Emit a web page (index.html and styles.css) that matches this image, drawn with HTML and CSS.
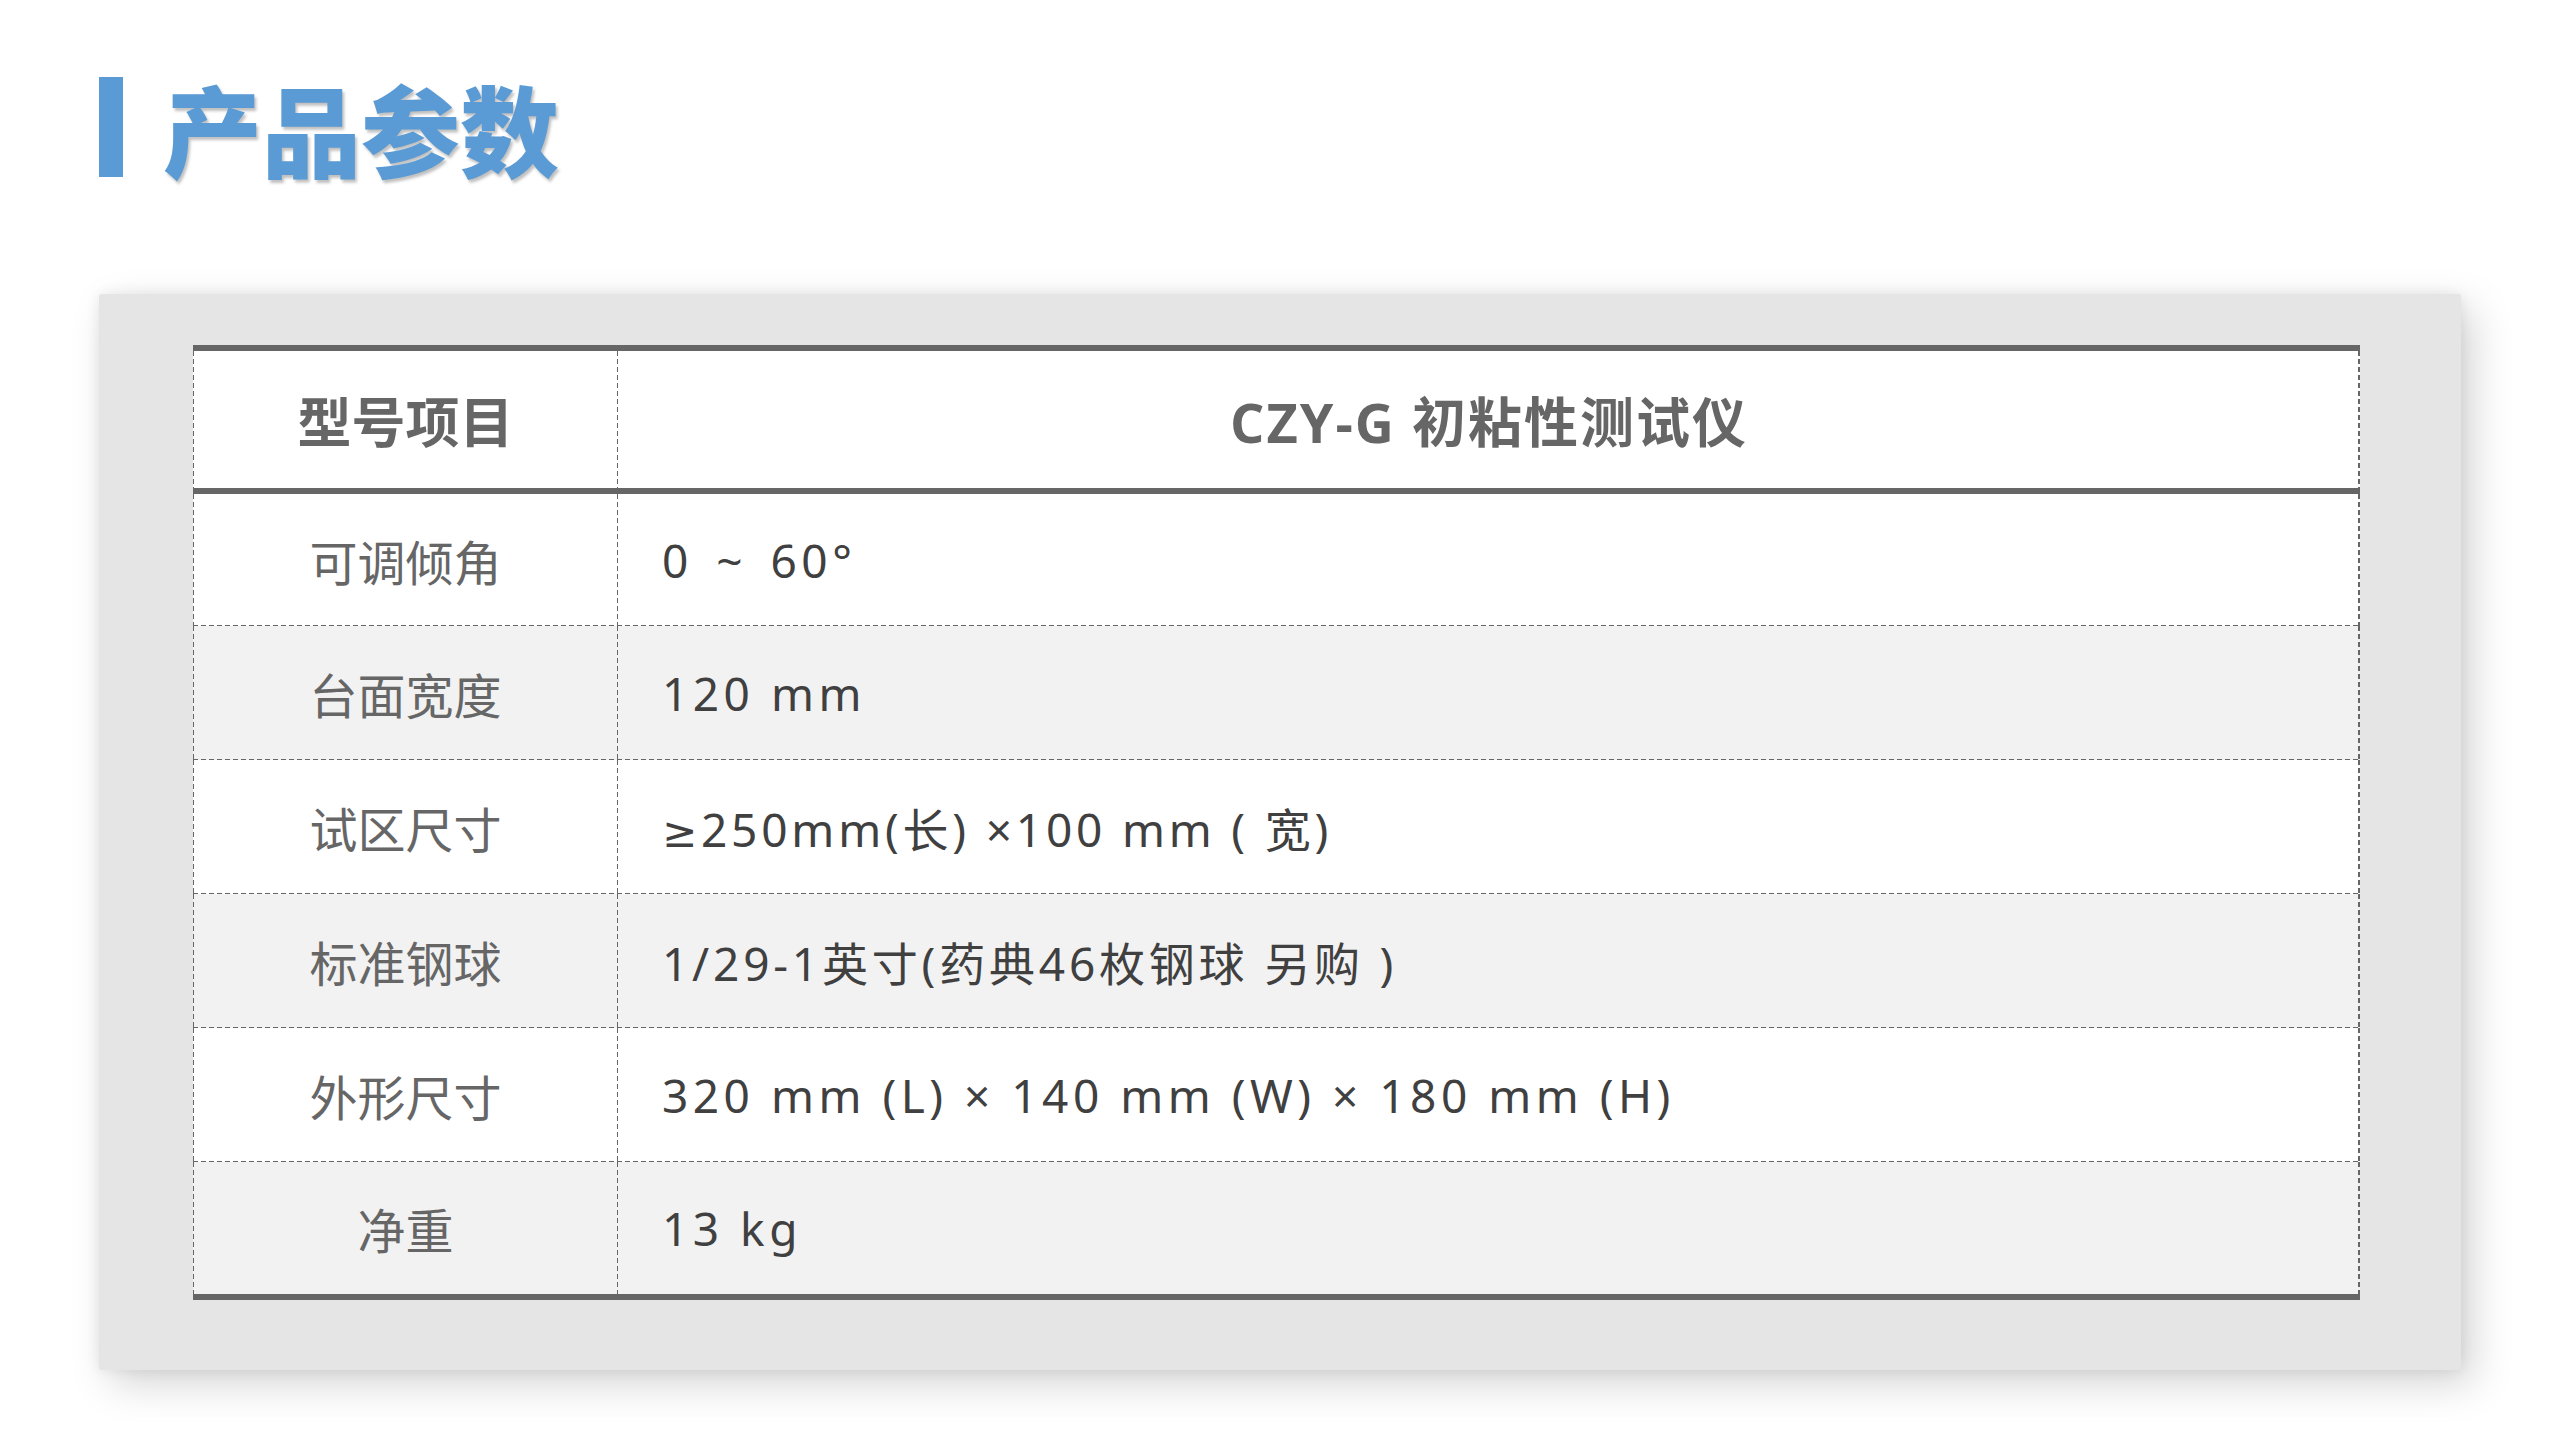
FILE: index.html
```html
<!DOCTYPE html>
<html lang="zh-CN">
<head>
<meta charset="utf-8">
<title>产品参数</title>
<link rel="stylesheet" href="styles.css">
</head>
<body>
<div class="page">
  <header class="title-bar">
    <span class="title-mark"></span>
    <h1 class="title">产品参数</h1>
  </header>
  <section class="card">
    <div class="spec">
      <div class="row head">
        <div class="cell label"><span>型号项目</span></div>
        <div class="cell value"><span>CZY-G 初粘性测试仪</span></div>
      </div>
      <div class="row r1">
        <div class="cell label"><span>可调倾角</span></div>
        <div class="cell value"><span>0 <span class="sep">~</span> 60°</span></div>
      </div>
      <div class="row alt">
        <div class="cell label"><span>台面宽度</span></div>
        <div class="cell value"><span>120 mm</span></div>
      </div>
      <div class="row">
        <div class="cell label"><span>试区尺寸</span></div>
        <div class="cell value tight"><span><span class="sym">≥</span>250mm(长) ×100 mm ( 宽)</span></div>
      </div>
      <div class="row alt">
        <div class="cell label"><span>标准钢球</span></div>
        <div class="cell value tight"><span>1/29-1英寸(药典46枚钢球 另购 )</span></div>
      </div>
      <div class="row">
        <div class="cell label"><span>外形尺寸</span></div>
        <div class="cell value"><span>320 mm (L) × 140 mm (W) × 180 mm (H)</span></div>
      </div>
      <div class="row alt last">
        <div class="cell label"><span>净重</span></div>
        <div class="cell value"><span>13 kg</span></div>
      </div>
    </div>
  </section>
</div>
</body>
</html>
```
FILE: styles.css
```css
html, body {
  margin: 0;
  padding: 0;
  background: #ffffff;
}

:root {
  --dash-h: repeating-linear-gradient(to right, #666666 0 5px, transparent 5px 8px);
  --dash-v: repeating-linear-gradient(to bottom, #666666 0 5px, transparent 5px 8px);
}

.page {
  width: 2560px;
  height: 1440px;
  padding: 77px 0 0 99px;
  box-sizing: border-box;
  font-family: "Noto Sans", "Noto Sans CJK SC", sans-serif;
}

.title-bar {
  display: flex;
  align-items: center;
  height: 100px;
  gap: 40px;
}

.title-mark {
  width: 24px;
  height: 100px;
  background: #5b9bd5;
}

.title {
  margin: 0;
  font-family: "Noto Sans CJK SC", sans-serif;
  font-weight: 900;
  font-size: 99px;
  line-height: 100px;
  color: #5b9bd5;
  text-shadow: 2px 3px 3px rgba(0, 0, 0, 0.25);
}

.card {
  margin-top: 117px;
  width: 2362px;
  height: 1076px;
  box-sizing: border-box;
  padding: 51px 0 0 94px;
  background: #e5e5e5;
  border-radius: 3px;
  box-shadow: 12px 14px 40px rgba(0, 0, 0, 0.17), 0 0 14px rgba(0, 0, 0, 0.08);
}

.spec {
  width: 2167px;
  box-sizing: border-box;
  border-top: 6px solid #666666;
  border-bottom: 6px solid #666666;
  background: #ffffff;
}

.row {
  display: flex;
  height: 134px;
  box-sizing: border-box;
  background-color: #ffffff;
  background-image: var(--dash-v), var(--dash-v), var(--dash-h);
  background-size: 1px 100%, 2px 100%, 100% 1px;
  background-position: left top, right top, left bottom;
  background-repeat: no-repeat;
}

.row.alt {
  background-color: #f2f2f2;
}

.row.head {
  height: 143px;
  border-bottom: 6px solid #666666;
  background-size: 1px 100%, 2px 100%, 0 0;
}

.row.r1 {
  height: 132px;
}

.row.last {
  height: 132px;
  background-size: 1px 100%, 2px 100%, 0 0;
}

.cell {
  display: flex;
  align-items: center;
}

.cell.label {
  width: 425px;
  flex: none;
  justify-content: center;
  background-image: var(--dash-v);
  background-size: 1px 100%;
  background-position: right top;
  background-repeat: no-repeat;
  font-family: "Noto Sans CJK SC", sans-serif;
  font-size: 48px;
  color: #666666;
}

.cell.value {
  flex: 1;
  padding-left: 44px;
  font-size: 46px;
  color: #404040;
  letter-spacing: 4.5px;
  white-space: pre;
}

.cell.value.tight {
  letter-spacing: 3.8px;
}

.sep {
  padding: 0 7px;
}

.sym {
  font-family: "DejaVu Sans", sans-serif;
  font-size: 42px;
}

.row.head .cell {
  font-family: "Open Sans", "Noto Sans CJK SC", sans-serif;
  font-weight: 700;
  font-size: 54px;
  color: #666666;
}

.row.head .cell.value {
  justify-content: center;
  padding-left: 0;
  letter-spacing: 2px;
}
```
